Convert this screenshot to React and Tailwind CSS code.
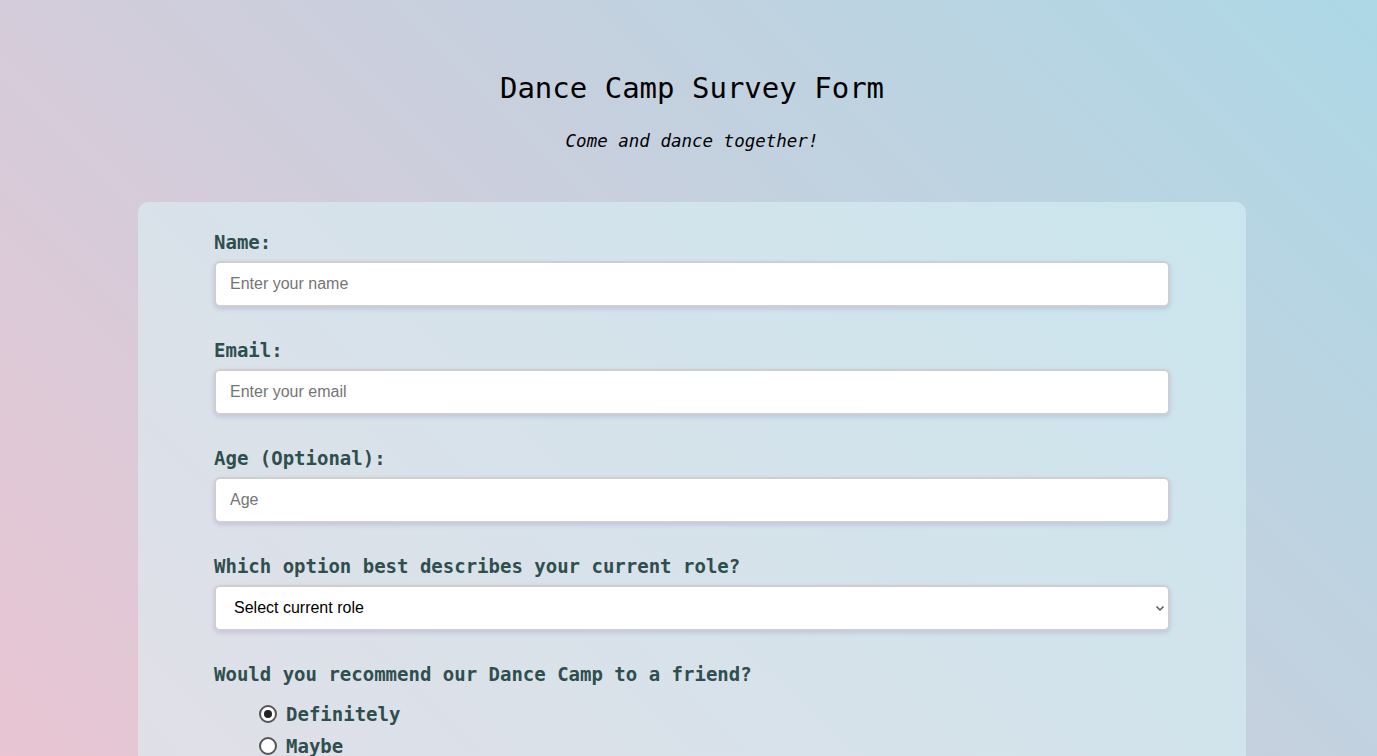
import React, { useState } from 'react';

const ROLES = ['Student', 'Full Time Job', 'Full Time Learner', 'Prefer not to say', 'Other'];

const RECOMMEND = [
  { value: 'definitely', label: 'Definitely' },
  { value: 'maybe', label: 'Maybe' },
  { value: 'not-sure', label: 'Not sure' },
];

const mono = { fontFamily: '"DejaVu Sans Mono", "Liberation Mono", monospace' };
const sans = { fontFamily: '"Liberation Sans", Arial, sans-serif' };

const inputClass =
  'block w-full h-[46px] rounded-[6px] border-2 border-[#cfcfcf] bg-white px-[14px] text-[16px] text-black placeholder:text-[#757575] shadow-[0_2px_4px_rgba(120,110,200,0.25)] outline-none';

const Field = ({ label, children }) => (
  <div className="mb-[31px]">
    <div className="mb-[7px] text-[19px] leading-[24px] font-bold text-[#2f4f4f]" style={mono}>
      {label}
    </div>
    {children}
  </div>
);

const Radio = ({ checked, label, onClick }) => (
  <button type="button" onClick={onClick} className="flex h-[32px] items-center gap-[9px] pl-[45px]">
    <span className="flex h-[18px] w-[18px] items-center justify-center rounded-full border-2 border-[#555] bg-white">
      {checked && <span className="h-[8px] w-[8px] rounded-full bg-[#222]" />}
    </span>
    <span className="text-[19px] font-bold text-[#2f4f4f]" style={mono}>
      {label}
    </span>
  </button>
);

export default function App() {
  const [recommend, setRecommend] = useState('definitely');

  return (
    <div className="min-h-screen bg-fixed bg-[linear-gradient(45deg,#e9c5d3,#add8e6)] pl-[7px] pb-16">
      <header className="pt-[70px] text-center text-black" style={mono}>
        <h1 className="text-[29px] leading-[36px]">Dance Camp Survey Form</h1>
        <p className="mt-[24px] text-[17.5px] leading-[22px] italic">Come and dance together!</p>
      </header>

      <form className="mx-auto mt-[50px] w-[1108px] rounded-[10px] bg-fixed bg-[linear-gradient(45deg,#e2dfe7,#c6e7ef)] px-[76px] pt-[28px] pb-10">
        <Field label="Name:">
          <input className={inputClass} style={sans} placeholder="Enter your name" />
        </Field>
        <Field label="Email:">
          <input className={inputClass} style={sans} placeholder="Enter your email" />
        </Field>
        <Field label="Age (Optional):">
          <input className={inputClass} style={sans} placeholder="Age" />
        </Field>
        <Field label="Which option best describes your current role?">
          <div className="relative">
            <select
              className={`${inputClass} appearance-none pl-[18px] pr-10`}
              style={sans}
              defaultValue=""
            >
              <option value="" disabled>
                Select current role
              </option>
              {ROLES.map((r) => (
                <option key={r}>{r}</option>
              ))}
            </select>
            <svg
              className="pointer-events-none absolute right-[4px] top-1/2 -translate-y-1/2"
              width="12"
              height="12"
              viewBox="0 0 12 12"
            >
              <path d="M2.5 4.5 L6 8 L9.5 4.5" fill="none" stroke="#555" strokeWidth="1.5" />
            </svg>
          </div>
        </Field>

        <div className="mb-[12px] text-[19px] leading-[24px] font-bold text-[#2f4f4f]" style={mono}>
          Would you recommend our Dance Camp to a friend?
        </div>
        <div className="mb-[29px] flex flex-col items-start">
          {RECOMMEND.map((o) => (
            <Radio
              key={o.value}
              label={o.label}
              checked={recommend === o.value}
              onClick={() => setRecommend(o.value)}
            />
          ))}
        </div>

        <Field label="Any comments or suggestions?">
          <textarea
            className="block h-[120px] w-full rounded-[6px] border-2 border-[#cfcfcf] bg-white p-[14px] text-[16px] placeholder:text-[#757575]"
            style={sans}
            placeholder="Enter your comment here..."
          />
        </Field>

        <button
          type="submit"
          className="block w-full h-[46px] rounded-[6px] bg-[#2f4f4f] text-[18px] font-bold text-white"
          style={mono}
        >
          Submit
        </button>
      </form>
    </div>
  );
}
